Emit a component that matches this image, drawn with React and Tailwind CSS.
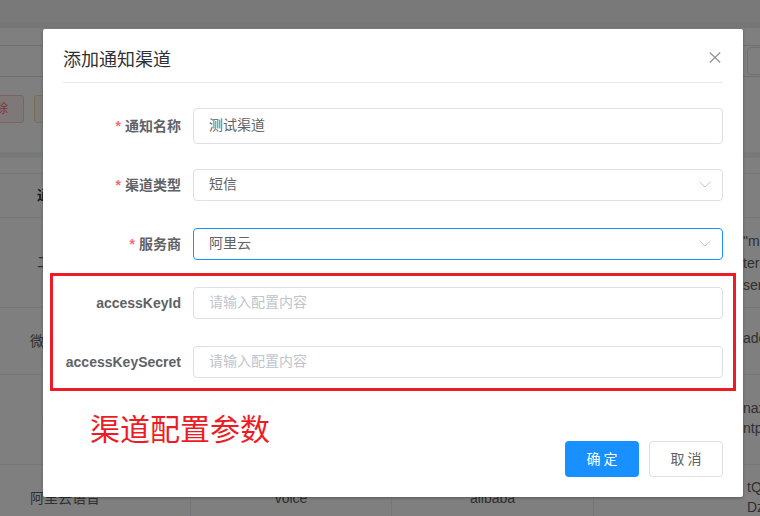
import React from "react";

const FONT = "font-['Liberation_Sans','Noto_Sans_CJK_SC',sans-serif]";

function Chevron() {
  return (
    <svg width="12" height="7" viewBox="0 0 12 7" fill="none">
      <path d="M0.5 0.8 L6 6 L11.5 0.8" stroke="#c0c4cc" strokeWidth="1" />
    </svg>
  );
}

function Row({ label, required, children }) {
  return (
    <div className="flex h-[37px] items-center">
      <div className="w-[130px] shrink-0 pr-[12px] text-right text-[14px] font-bold text-[#606266] leading-[20px]">
        {required && <span className="mr-[4px] text-[#f56c6c]">*</span>}
        {label}
      </div>
      <div className="flex-1">{children}</div>
    </div>
  );
}

function TextInput({ value, placeholder, h = "h-[32px]" }) {
  return (
    <div
      className={`${h} flex items-center rounded-[4px] border border-[#dcdfe6] bg-white pl-[15px] text-[14px]`}
    >
      {value ? (
        <span className="text-[#606266]">{value}</span>
      ) : (
        <span className="text-[#c0c4cc]">{placeholder}</span>
      )}
    </div>
  );
}

function Select({ value, focused }) {
  return (
    <div
      className={`h-[32px] flex items-center justify-between rounded-[4px] border ${
        focused ? "border-[#1890ff]" : "border-[#dcdfe6]"
      } bg-white pl-[15px] pr-[11px] text-[14px]`}
    >
      <span className="text-[#606266]">{value}</span>
      <Chevron />
    </div>
  );
}

function Cells({ c1, c2, c3, c4, h, last = "pl-[149px]" }) {
  const cell = "shrink-0 border-r border-[#ebeef5]";
  return (
    <div className={`flex ${h} items-stretch border-b border-[#ebeef5]`}>
      <div className={`w-[191px] ${cell} flex items-center`}>
        <div className="w-[130px] text-center">{c1}</div>
      </div>
      <div className={`w-[201px] ${cell} flex items-center justify-center`}>{c2}</div>
      <div className={`w-[202px] ${cell} flex items-center justify-center`}>{c3}</div>
      <div
        className={`flex min-w-0 flex-1 flex-col justify-center overflow-hidden ${last} whitespace-nowrap`}
      >
        {c4}
      </div>
    </div>
  );
}

function Background() {
  return (
    <div className="flex flex-col">
      <div className="h-[22px] bg-[#f3f3f3]" />
      <div className="h-[6px] bg-[#ececec]" />
      <div className="h-[17px]" />
      <div className="flex h-[32px] justify-end border-y border-[#dcdfe6]">
        <div className="-mr-[27px] mt-[1px] h-[28px] w-[40px] shrink-0 rounded-[4px] border border-[#dcdfe6]" />
      </div>
      <div className="h-[18px]" />
      <div className="flex h-[28px] gap-[10px]">
        <div className="-ml-[32px] flex h-[28px] w-[56px] shrink-0 items-center justify-center rounded-[3px] border border-[#fbc4c4] bg-[#fef0f0] text-[12px] text-[#f56c6c]">
          删除
        </div>
        <div className="flex h-[28px] w-[56px] shrink-0 items-center justify-center rounded-[3px] border border-[#f5dab1] bg-[#fdf6ec] text-[12px] text-[#e6a23c]">
          修改
        </div>
      </div>
      <div className="h-[29px]" />
      <div className="h-[6px] bg-[#f0f2f5]" />
      <div className="h-[15px]" />
      <div className="flex flex-col border-t border-[#ebeef5] text-[14px] text-[#606266]">
        <Cells
          h="h-[44px]"
          c1={<span className="font-bold text-[#303133]">通知名称</span>}
        />
        <Cells
          h="h-[90px]"
          c1="二方短信"
          c4={
            <div className="flex flex-col leading-[22px]">
              <span>"m</span>
              <span>ter</span>
              <span>ser</span>
            </div>
          }
        />
        <Cells
          h="h-[67px]"
          c1="微信公众号"
          c4={
            <div className="flex flex-col pb-[6px] leading-[22px]">
              <span>ado</span>
            </div>
          }
        />
        <Cells
          h="h-[90px]"
          c1="custom"
          c4={
            <div className="flex flex-col pb-[4px] leading-[20px]">
              <span>nax</span>
              <span>ntps</span>
            </div>
          }
        />
        <Cells
          h="h-[68px]"
          c1="阿里云语音"
          c2="voice"
          c3="alibaba"
          last="pl-[153px]"
          c4={
            <div className="flex flex-col pb-[4px] leading-[20px]">
              <span>tQx</span>
              <span>Dz</span>
            </div>
          }
        />
      </div>
    </div>
  );
}

export default function App() {
  return (
    <div className={`relative h-[516px] w-[760px] overflow-hidden bg-white ${FONT}`}>
      <Background />
      <div className="absolute inset-0 bg-black/50 pl-[43px] pt-[29px]">
        <div className="h-[468px] w-[700px] rounded-[2px] bg-white px-[20px] shadow-[0_1px_3px_rgba(0,0,0,0.3)]">
          <div className="flex items-center justify-between pt-[19px]">
            <span className="text-[18px] leading-[24px] text-[#303133]">添加通知渠道</span>
            <svg width="12" height="11" viewBox="0 0 12 11" className="mb-[6px] mr-[2px]">
              <path d="M0.8 0.5 L11.2 10.5 M11.2 0.5 L0.8 10.5" stroke="#909399" strokeWidth="1.2" />
            </svg>
          </div>
          <div className="mt-[10px] h-px bg-[#e4e7ed]" />

          <div className="mt-[24px] flex flex-col gap-[22px]">
            <Row label="通知名称" required>
              <TextInput value="测试渠道" h="h-[36px]" />
            </Row>
            <Row label="渠道类型" required>
              <Select value="短信" />
            </Row>
            <Row label="服务商" required>
              <Select value="阿里云" focused />
            </Row>
          </div>

          <div className="-mx-[13px] mt-[11px] flex flex-col gap-[22px] border-[3px] border-[#ed1c24] px-[10px] py-[8px]">
            <Row label="accessKeyId">
              <TextInput placeholder="请输入配置内容" />
            </Row>
            <Row label="accessKeySecret">
              <TextInput placeholder="请输入配置内容" />
            </Row>
          </div>

          <div className="mt-[19px] flex items-start justify-between">
            <span className="ml-[27px] text-[30px] leading-[40px] text-[#ed1c24]">渠道配置参数</span>
            <div className="mt-[31px] flex gap-[10px]">
              <div className="flex h-[36px] w-[74px] items-center justify-center rounded-[4px] bg-[#1890ff] pl-[3px] text-[14px] tracking-[3px] text-white">
                确定
              </div>
              <div className="flex h-[36px] w-[74px] items-center justify-center rounded-[4px] border border-[#dcdfe6] bg-white pl-[3px] text-[14px] tracking-[3px] text-[#606266]">
                取消
              </div>
            </div>
          </div>
        </div>
      </div>
    </div>
  );
}
